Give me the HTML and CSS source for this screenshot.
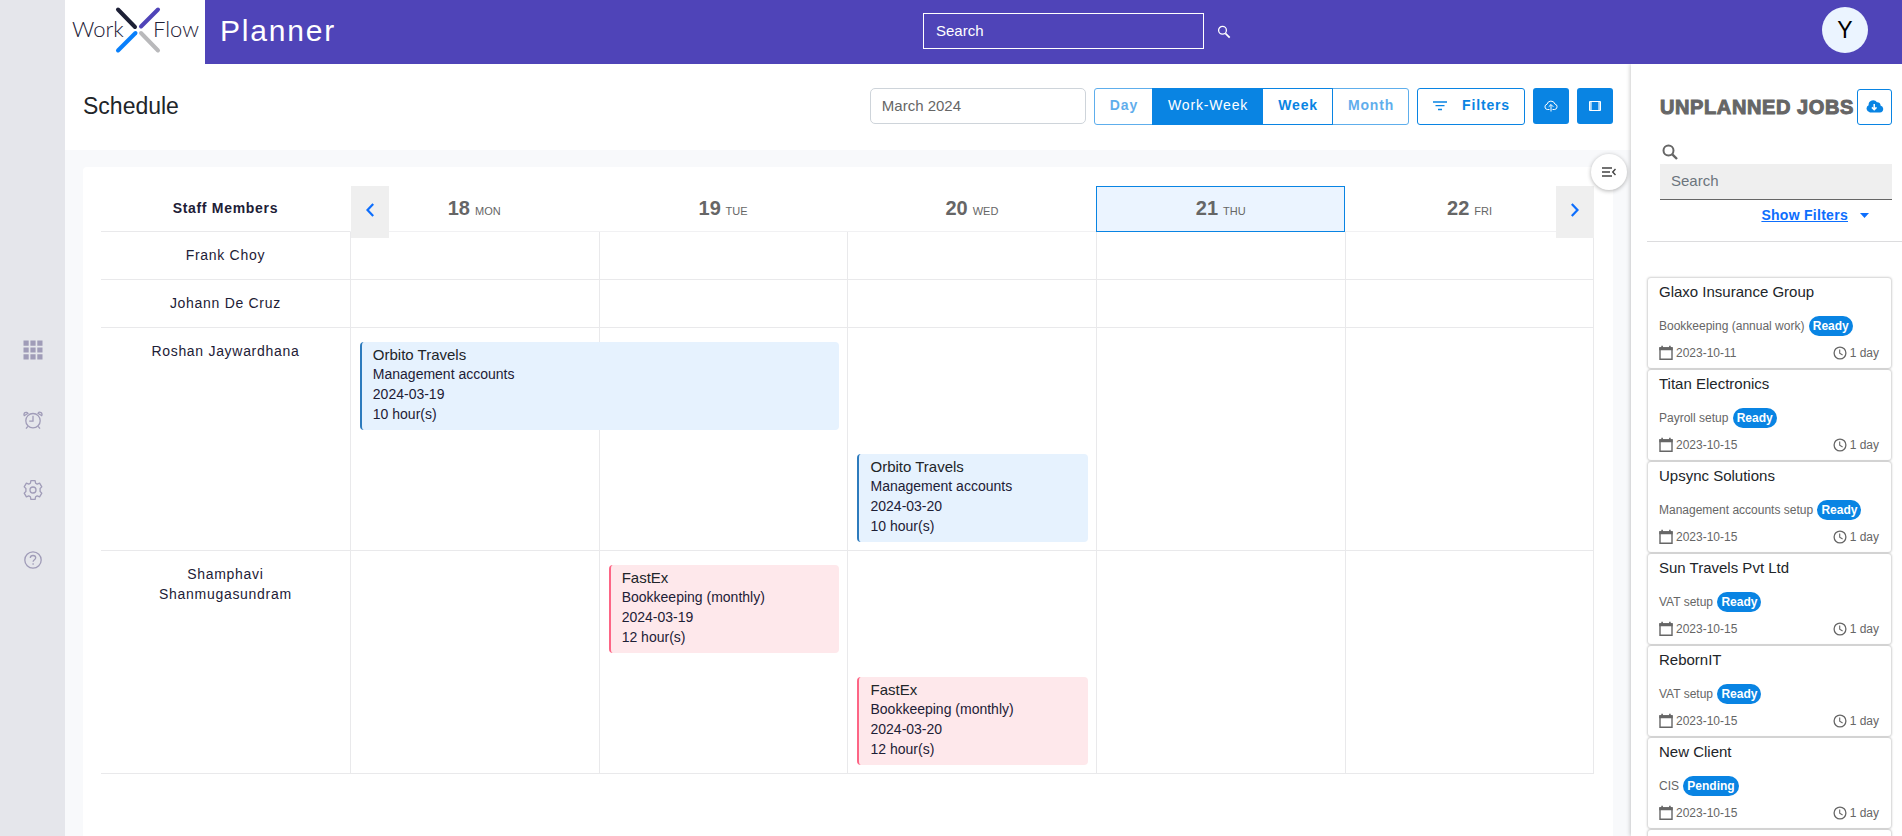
FILE: index.html
```html
<!DOCTYPE html>
<html lang="en">
<head>
<meta charset="utf-8">
<meta name="viewport" content="width=device-width, initial-scale=1">
<title>WorkXFlow Planner</title>
<link rel="stylesheet" href="styles.css">
</head>
<body>
<svg class="sprite" aria-hidden="true">
  <symbol id="i-cal" viewBox="0 0 16 16"><path d="M2 3h12v11.3H2z" fill="none" stroke="currentColor" stroke-width="1.4"/><path d="M1.300 2.300h13.400v3H1.300zM3.300 .8h1.600v2H3.300zM11.100 .8h1.600v2h-1.600z" fill="currentColor"/></symbol>
  <symbol id="i-clock" viewBox="0 0 16 16"><circle cx="8" cy="8" r="5.900" fill="none" stroke="currentColor" stroke-width="1.300"/><path d="M7.700 4.500v3.800l2.900 1.700" fill="none" stroke="currentColor" stroke-width="1.100"/></symbol>
</svg>
<div class="app">
  <nav class="rail" aria-label="Main">
    <a href="#" aria-label="Planner"><svg width="20" height="20" viewBox="0 0 20 20"><path d="M.5.500h5.200v5.200H.5zM7.400.500h5.200v5.200H7.400zM14.300.500h5.200v5.200h-5.200zM.5 7.400h5.200v5.200H.5zM7.400 7.400h5.200v5.200H7.400zM14.300 7.400h5.200v5.200h-5.200zM.5 14.300h5.200v5.200H.5zM7.400 14.300h5.200v5.200H7.400zM14.300 14.300h5.200v5.200h-5.200z" fill="currentColor"/></svg></a>
    <a href="#" aria-label="Timer"><svg width="20" height="20" viewBox="0 0 20 20" fill="none" stroke="currentColor" stroke-width="1.300"><circle cx="10" cy="10.700" r="7.200"/><path d="M10 5.800v5.400H6.200M4.800 16.300 3 18.700M15.200 16.300l1.800 2.400M1.300 5.700a2.200 2.200 0 1 1 3.700-2.400zM18.700 5.700A2.200 2.200 0 1 0 15 3.300z"/></svg></a>
    <a href="#" aria-label="Settings"><svg width="20" height="20" viewBox="0 0 20 20" fill="none" stroke="currentColor" stroke-width="1.300" stroke-linejoin="round"><circle cx="10" cy="10" r="3"/><path d="M7.900.700h4.200l.5 2.500 1.600.9 2.400-.9 2.200 3.700-1.700 1.600v3l1.700 1.600-2.200 3.700-2.400-.9-1.600.9-.5 2.500H7.900l-.5-2.500-1.600-.9-2.400.9-2.200-3.700 1.700-1.600v-3L1.200 6.900l2.200-3.700 2.400.9 1.600-.9z"/></svg></a>
    <a href="#" aria-label="Help"><svg width="20" height="20" viewBox="0 0 20 20" fill="none" stroke="currentColor" stroke-width="1.300"><circle cx="10" cy="10" r="8.200"/><path d="M7.300 8c0-1.700 1.200-2.500 2.700-2.500s2.700.9 2.700 2.300c0 1.900-2.600 1.900-2.600 4M10.100 13.300v1.500"/></svg></a>
  </nav>
  <div class="page">
    <header class="topbar">
      <div class="brand">
        <a class="logo" href="#" aria-label="WorkXFlow home">
          <svg width="140" height="64" viewBox="0 0 140 64">
            <g stroke-width="4" stroke-linecap="round"><path d="m53 9.500 17 17.500" stroke="#1d2036"/><path d="M93 9.500 76 26.500" stroke="#4f44b8"/><path d="m53 50.500 17.500-17.500" stroke="#087ffb"/><path d="M93 50.500 76 33" stroke="#b9b9bb"/></g>
            <text class="logo-text" x="7" y="37">Work</text><text class="logo-text" x="88" y="37">Flow</text>
          </svg>
        </a>
        <h1>Planner</h1>
      </div>
      <form class="search">
        <input type="search" placeholder="Search" aria-label="Search">
        <button type="button" aria-label="Search"><svg width="14" height="14" viewBox="0 0 14 14" fill="none" stroke="currentColor"><circle cx="5.500" cy="5.300" r="3.900" stroke-width="1.300"/><path d="m8.400 8.300 4.300 4.300" stroke-width="1.700"/></svg></button>
      </form>
      <button class="avatar" type="button" aria-label="Account">Y</button>
    </header>
    <div class="body">
      <main class="main">
        <div class="toolbar">
          <h2>Schedule</h2>
          <input class="month" type="text" value="March 2024" aria-label="Month">
          <div class="views">
            <button class="btn dim" type="button">Day</button>
            <button class="btn active" type="button">Work-Week</button>
            <button class="btn" type="button">Week</button>
            <button class="btn dim" type="button">Month</button>
          </div>
          <button class="btn filters" type="button"><svg width="14" height="12" viewBox="0 0 14 12" fill="none" stroke="currentColor" stroke-width="1.300"><path d="M0 3h14M2.500 6.700h9M5 10.500h4"/></svg>Filters</button>
          <button class="icon-btn" type="button" aria-label="Upload"><svg width="14" height="12" viewBox="0 0 14 12" fill="none" stroke="currentColor"><path d="M5.500 9.500H3.300A2.700 2.700 0 0 1 3 4.200 4.100 4.100 0 0 1 10.900 4a2.800 2.800 0 0 1-.2 5.500H8.500M7 11.500V4.700M4.700 6.800 7 4.500l2.300 2.300"/></svg></button>
          <button class="icon-btn" type="button" aria-label="Layout"><svg width="12" height="10" viewBox="0 0 12 10"><path d="M.500 .500h11v9H.500z" fill="none" stroke="currentColor"/><path d="M1 .500h1.800v9H1zM9.200 .500H11v9H9.200z" fill="currentColor" opacity=".7"/></svg></button>
        </div>
        <button class="collapse" type="button" aria-label="Toggle unplanned jobs"><svg width="14" height="10" viewBox="0 0 14 10" fill="none" stroke="currentColor" stroke-width="1.400"><path d="M0 1h10M0 5h8M0 9h10M13.500 2 10.700 5l2.800 3"/></svg></button>
        <div class="content">
          <section class="card">
            <table class="schedule">
              <thead><tr>
                <th scope="col" class="staff">Staff Members</th>
                <th scope="col"><button class="nav prev" type="button" aria-label="Previous week"><svg width="8" height="14" viewBox="0 0 8 14" fill="none" stroke="currentColor" stroke-width="2.200"><path d="M7.200 1 1.500 7l5.700 6"/></svg></button><b>18</b> MON</th>
                <th scope="col"><b>19</b> TUE</th>
                <th scope="col"><b>20</b> WED</th>
                <th scope="col" class="today"><b>21</b> THU</th>
                <th scope="col"><b>22</b> FRI<button class="nav next" type="button" aria-label="Next week"><svg width="8" height="14" viewBox="0 0 8 14" fill="none" stroke="currentColor" stroke-width="2.200"><path d="m.8 1 5.700 6-5.700 6"/></svg></button></th>
              </tr></thead>
              <tbody>
                <tr><th scope="row">Frank Choy</th><td></td><td></td><td></td><td></td><td></td></tr>
                <tr><th scope="row">Johann De Cruz</th><td></td><td></td><td></td><td></td><td></td></tr>
                <tr><th scope="row">Roshan Jaywardhana</th>
                  <td><article class="event span-2"><h3>Orbito Travels</h3><p>Management accounts</p><p>2024-03-19</p><p>10 hour(s)</p></article></td>
                  <td></td>
                  <td><article class="event lane-2"><h3>Orbito Travels</h3><p>Management accounts</p><p>2024-03-20</p><p>10 hour(s)</p></article></td>
                  <td></td><td></td></tr>
                <tr><th scope="row">Shamphavi Shanmugasundram</th>
                  <td></td>
                  <td><article class="event pink"><h3>FastEx</h3><p>Bookkeeping (monthly)</p><p>2024-03-19</p><p>12 hour(s)</p></article></td>
                  <td><article class="event pink lane-2"><h3>FastEx</h3><p>Bookkeeping (monthly)</p><p>2024-03-20</p><p>12 hour(s)</p></article></td>
                  <td></td><td></td></tr>
              </tbody>
            </table>
          </section>
        </div>
      </main>
      <aside class="jobs">
        <div class="jobs-head">
          <div class="jobs-title"><h2>UNPLANNED JOBS</h2>
            <button type="button" aria-label="Download"><svg width="18" height="13" viewBox="0 0 18 13"><path d="M14.500 5.600A3 3 0 0 0 11 2.300 4.600 4.600 0 0 0 2.600 5.200 3.900 3.900 0 0 0 4 12.500h10a3.500 3.500 0 0 0 .5-6.900z" fill="currentColor"/><path d="M8.200 4v5.500M5.900 7.400l2.300 2.300 2.300-2.300" fill="none" stroke="#fff" stroke-width="1.500"/></svg></button></div>
          <label for="job-search" aria-label="Search jobs"><svg width="16" height="16" viewBox="0 0 16 16" fill="none" stroke="currentColor"><circle cx="6.500" cy="6.500" r="5" stroke-width="2"/><path d="m10.300 10.300 4.700 4.700" stroke-width="2.400"/></svg></label>
          <input id="job-search" type="search" placeholder="Search">
          <div class="show"><a href="#">Show Filters</a><svg width="9" height="5" viewBox="0 0 9 5"><path d="M0 0h9L4.500 5z" fill="currentColor"/></svg></div>
        </div>
        <ul class="job-list">
          <li><h3>Glaxo Insurance Group</h3><p>Bookkeeping (annual work) <span class="badge">Ready</span></p><div><svg><use href="#i-cal"/></svg><span class="date">2023-10-11</span><svg><use href="#i-clock"/></svg><span>1 day</span></div></li>
          <li><h3>Titan Electronics</h3><p>Payroll setup <span class="badge">Ready</span></p><div><svg><use href="#i-cal"/></svg><span class="date">2023-10-15</span><svg><use href="#i-clock"/></svg><span>1 day</span></div></li>
          <li><h3>Upsync Solutions</h3><p>Management accounts setup <span class="badge">Ready</span></p><div><svg><use href="#i-cal"/></svg><span class="date">2023-10-15</span><svg><use href="#i-clock"/></svg><span>1 day</span></div></li>
          <li><h3>Sun Travels Pvt Ltd</h3><p>VAT setup <span class="badge">Ready</span></p><div><svg><use href="#i-cal"/></svg><span class="date">2023-10-15</span><svg><use href="#i-clock"/></svg><span>1 day</span></div></li>
          <li><h3>RebornIT</h3><p>VAT setup <span class="badge">Ready</span></p><div><svg><use href="#i-cal"/></svg><span class="date">2023-10-15</span><svg><use href="#i-clock"/></svg><span>1 day</span></div></li>
          <li><h3>New Client</h3><p>CIS <span class="badge">Pending</span></p><div><svg><use href="#i-cal"/></svg><span class="date">2023-10-15</span><svg><use href="#i-clock"/></svg><span>1 day</span></div></li>
          <li class="empty"></li>
        </ul>
      </aside>
    </div>
  </div>
</div>
</body>
</html>
```
FILE: styles.css
```css
* { box-sizing: border-box; }
body { margin: 0; font-family: "Liberation Sans", Arial, sans-serif; font-size: 14px; color: #212529; background: #fff; }
h1, h2, h3, p, ul { margin: 0; padding: 0; font-weight: 400; }
button, input { font: inherit; margin: 0; }
button { cursor: pointer; padding: 0; }
input { outline: none; border-radius: 0; appearance: none; }
svg { display: block; flex: none; }
.sprite { position: absolute; width: 0; height: 0; }

.app { display: flex; height: 100vh; overflow: hidden; }
.rail { width: 65px; flex: none; background: #e5e6eb; display: flex; flex-direction: column; align-items: center; justify-content: center; gap: 50px; padding-top: 74px; }
.rail a { color: #a09cb8; }
.page { flex: 1; min-width: 0; display: flex; flex-direction: column; }

.topbar { height: 64px; flex: none; background: #4f44b8; color: #fff; display: flex; align-items: center; justify-content: space-between; padding-right: 34px; }
.brand { display: flex; height: 64px; }
.logo { width: 140px; background: #fff; }
.logo-text { font-family: Lato, sans-serif; font-weight: 300; font-size: 22px; fill: #1d2036; }
.brand h1 { font-size: 30px; line-height: 62px; letter-spacing: 0.06em; padding-left: 15px; }
.search { display: flex; align-items: center; height: 62px; align-self: flex-start; }
.search input { width: 281px; height: 36px; border: 1px solid #fff; background: transparent; color: #fff; font-size: 15px; padding: 0 12px 2px; }
.search input::placeholder { color: #fff; opacity: 1; }
.search button { border: 0; background: none; color: #fff; width: 31px; height: 36px; padding: 2px 0 0 13px; }
.avatar { width: 46px; height: 46px; border: 0; border-radius: 50%; background: #ebf4ff; color: #000; font-size: 23px; padding: 0; margin-bottom: 4px; }

.body { flex: 1; min-height: 0; display: flex; }
.main { flex: 1; min-width: 0; display: flex; flex-direction: column; position: relative; }
.toolbar { height: 86px; flex: none; display: flex; align-items: center; gap: 8px; padding: 0 18px 2px 18px; }
.toolbar h2 { font-size: 23px; line-height: 28px; margin-right: auto; }
.month { width: 216px; height: 36px; border: 1px solid #ced4da; border-radius: 5px; padding: 0 11px 2px; font-size: 15px; color: #666; }
.views { display: flex; }
.btn { height: 37px; border: 1px solid #0984e3; background: #fff; color: #0984e3; font-weight: 700; letter-spacing: 0.06em; padding: 0 14px 2px 15px; }
.views .btn + .btn { margin-left: -1px; }
.views .btn:first-child { border-radius: 3px 0 0 3px; }
.views .btn:last-child { border-radius: 0 3px 3px 0; }
.btn.active { background: #0984e3; color: #fff; font-weight: 400; position: relative; }
.btn.dim { opacity: 0.65; }
.filters { display: flex; align-items: center; gap: 15px; border-radius: 3px; }
.icon-btn { width: 36px; height: 36px; border: 0; border-radius: 3px; background: #0984e3; color: #fff; display: grid; place-items: center; }

.collapse { position: absolute; right: 4px; top: 90px; width: 36px; height: 36px; border: 0; border-radius: 50%; background: #fff; color: #444; box-shadow: 0 1px 4px rgba(0, 0, 0, 0.3); display: grid; place-items: center; z-index: 2; }
.content { flex: 1; min-height: 0; background: #f8f9fb; padding: 17px 18px 0; display: flex; }
.card { flex: 1; background: #fff; border-radius: 4px 4px 0 0; padding: 19px 19px 0 18px; }
.schedule { width: 100%; table-layout: fixed; border-collapse: separate; border-spacing: 0; }
.schedule th, .schedule td { padding: 0; border-bottom: 1px solid #e9e9eb; }
.schedule thead th { height: 46px; padding-bottom: 1px; font-size: 11px; font-weight: 400; color: #666; position: relative; border-bottom-color: #f1f1f3; }
.schedule thead b { font-size: 20px; margin-right: 2px; }
.schedule thead .staff { font-size: 14px; font-weight: 700; letter-spacing: 0.05em; color: #1d2036; border-bottom-color: #e9e9eb; }
.schedule thead .today { background: #ebf4ff; border: 1px solid #0984e3; }
.nav { position: absolute; top: 0; width: 38px; height: 52px; border: 0; background: #efefef; color: #0d6efd; display: grid; place-items: center; padding-bottom: 4px; z-index: 1; }
.prev { left: 1px; }
.next { right: 0; }
.schedule tbody th { height: 48px; padding: 13px 40px 0; vertical-align: top; font-weight: 400; line-height: 20px; letter-spacing: 0.05em; color: #1d2036; }
.schedule td { vertical-align: top; border-left: 1px solid #e9e9eb; padding: 0 8px 0 9px; }
.schedule td:last-child { border-right: 1px solid #e9e9eb; }

.event { position: relative; z-index: 1; margin: 14px 0 8px; padding: 4px 8px 6px 11px; border-left: 2px solid #2d7bbd; border-radius: 4px; background: #e6f2fe; }
.event.span-2 { width: calc(200% + 18px); }
.event.lane-2 { margin-top: 126px; }
.event.pink { background: #fee8eb; border-left-color: #fd6585; }
.event h3 { font-size: 15px; line-height: 18px; }
.event p { line-height: 20px; color: #1d2036; }

.jobs { width: 271px; flex: none; display: flex; flex-direction: column; background: #fff; box-shadow: -1px 0 4px rgba(0, 0, 0, 0.2); position: relative; clip-path: inset(0 0 0 -8px); z-index: 1; padding: 25px 0 0 16px; color: #666; }
.jobs-head { height: 153px; flex: none; padding: 0 10px 0 13px; border-bottom: 1px solid #dcdcde; }
.jobs-title { display: flex; align-items: center; justify-content: space-between; }
.jobs-title h2 { font-size: 20px; font-weight: 700; letter-spacing: 0.03em; -webkit-text-stroke: 1px #666; white-space: nowrap; }
.jobs-title button { width: 35px; height: 36px; border: 1px solid #0984e3; border-radius: 3px; background: #fff; color: #0984e3; display: grid; place-items: center; padding-bottom: 2px; }
.jobs label { display: block; padding: 19px 0 4px 2px; }
.jobs input { display: block; width: 100%; height: 36px; border: 0; border-bottom: 1px solid #666; background: #efefef; padding: 0 11px 2px; font-size: 15px; }
.jobs input::placeholder { color: #6c757d; opacity: 1; }
.show { display: flex; align-items: center; justify-content: flex-end; gap: 12px; padding: 5px 23px 0 0; color: #0d6efd; line-height: 20px; }
.show a { color: inherit; font-weight: 700; letter-spacing: 0.02em; text-underline-offset: 1px; }
.job-list { list-style: none; padding: 36px 11px 0 5px; flex: 1; min-height: 0; overflow: hidden; margin-left: -4px; font-size: 12px; }
.job-list li { height: 90px; margin-bottom: 2px; padding: 4px 12px 0 11px; border-radius: 3px; background: #fff; box-shadow: 0 0 2px 1px rgba(0, 0, 0, 0.18); }
.job-list h3 { font-size: 15px; line-height: 20px; color: #212529; }
.job-list p { padding-top: 14px; line-height: 20px; white-space: nowrap; }
.badge { display: inline-block; background: #0984e3; color: #fff; font-weight: 700; border-radius: 10px; padding: 0 4px; margin-left: 1px; }
.job-list div { display: flex; align-items: center; line-height: 20px; padding-top: 7px; }
.job-list svg { width: 16px; height: 16px; margin: 0 2px 0 0; }
.job-list div svg:first-child { margin-left: -1px; }
.job-list .date { margin-right: auto; }
```
